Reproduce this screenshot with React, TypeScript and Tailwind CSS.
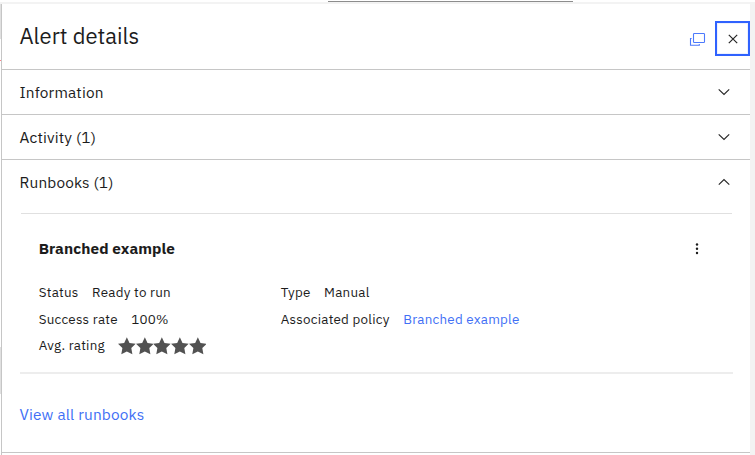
import React from "react";

function Chevron({ up = false }: { up?: boolean }) {
  return (
    <svg width="16" height="16" viewBox="0 0 16 16" fill="none" stroke="#262626" strokeWidth="1.15" className={up ? "rotate-180" : ""}>
      <path d="M2.7 5.3L8 10.5L13.2 5.3" />
    </svg>
  );
}

function Star() {
  return (
    <svg width="17.7" height="18" viewBox="0 0 17.7 18" fill="#525252" className="shrink-0">
      <path d="M8.85 .2L11.5 5.9L17.7 6.8L13.3 11.1L14.4 17.3L8.85 14.4L3.3 17.3L4.4 11.1L0 6.8L6.2 5.9Z" />
    </svg>
  );
}

function SectionHeader({ title, open = false }: { title: string; open?: boolean }) {
  return (
    <button className="flex h-11 w-full items-center justify-between pl-[17.5px] pr-[18px] text-left text-[15.4px] leading-6 tracking-[0.16px]">
      <span>{title}</span>
      <Chevron up={open} />
    </button>
  );
}

export default function App() {
  return (
    <div className="flex h-[455px] w-[755px] flex-col overflow-hidden bg-white font-['IBM_Plex_Sans',Roboto,sans-serif] text-[#1c1c1c]">
      <div className="h-0.5 shrink-0 pl-[328px] pt-px">
        <div className="h-px w-[245px] bg-[#8d8d8d]" />
      </div>
      <div className="h-0.5 shrink-0 bg-[#f3f3f3]" />
      <div className="flex min-h-0 flex-1">
        <div className="w-px shrink-0">
          <div className="h-[35px] bg-[#e0e0e0]" />
          <div className="mt-[21px] h-px bg-[#ff8389]" />
          <div className="mt-[286px] h-[47px] bg-[#e0e0e0]" />
        </div>
        <main className="w-[749px] shrink-0 border-l border-[#c6c6c6]">
          <header className="flex h-[66px] items-start justify-between border-b border-[#c6c6c6] pl-[17.5px]">
            <h1 className="pt-[16px] text-[22px] leading-8">Alert details</h1>
            <div className="flex items-center gap-[9px] pt-[17px]">
              <svg width="17" height="16" viewBox="0 0 17 16" fill="none" stroke="#4d7afc" strokeWidth="1.1">
                <rect x="4.5" y="2.5" width="11" height="9" rx=".8" />
                <path d="M2.6 7.5H1.5V14.2H10.3V13" />
              </svg>
              <button aria-label="Close" className="flex size-[35px] items-center justify-center border-2 border-[#2f62fe] shadow-[inset_0_0_0_1px_#edf1ff]">
                <svg width="10" height="10" viewBox="0 0 10 10" stroke="#262626" strokeWidth="1.2">
                  <path d="M.8 .8L9.2 9.2M9.2 .8L.8 9.2" />
                </svg>
              </button>
            </div>
          </header>
          <div className="border-b border-[#c6c6c6]"><SectionHeader title="Information" /></div>
          <div className="border-b border-[#c6c6c6]"><SectionHeader title="Activity (1)" /></div>
          <section className="h-[293px] border-b border-[#c6c6c6]">
            <SectionHeader title="Runbooks (1)" open />
            <div className="ml-[19px] mt-[9px] h-px w-[711px] bg-[#e0e0e0]" />
            <article className="ml-[18px] h-[160px] w-[713px] border-b-2 border-[#ededed] pl-[18.7px]">
              <div className="flex h-[65px] items-start justify-between pr-[32.5px] pt-[22px]">
                <h2 className="text-[15.4px] font-bold leading-6 tracking-[0.07px]">Branched example</h2>
                <svg width="8" height="16" viewBox="0 0 8 16" fill="#1c1c1c" className="mt-[5px]">
                  <circle cx="4" cy="3.5" r="1.2" /><circle cx="4" cy="7.8" r="1.2" /><circle cx="4" cy="12" r="1.2" />
                </svg>
              </div>
              <div className="grid grid-cols-[242px_1fr] text-[13.4px] leading-[27px] tracking-[0.24px]">
                <div className="flex gap-[13.5px]"><span>Status</span><span>Ready to run</span></div>
                <div className="flex gap-[13.5px]"><span>Type</span><span>Manual</span></div>
                <div className="flex gap-[13.5px]"><span>Success rate</span><span>100%</span></div>
                <div className="flex gap-[13.5px]"><span>Associated policy</span><a className="text-[#416ff5]">Branched example</a></div>
                <div className="flex h-[26px] items-start">
                  <span className="w-[79.2px] leading-[25px]">Avg. rating</span>
                  <span className="flex pt-[4px]"><Star /><Star /><Star /><Star /><Star /></span>
                </div>
              </div>
            </article>
            <a className="ml-[17.5px] mt-[28px] block text-[15.4px] leading-6 tracking-[0.17px] text-[#416ff5]">View all runbooks</a>
          </section>
        </main>
        <div className="w-[5px] shrink-0 bg-[#f3f3f3]" />
      </div>
    </div>
  );
}
